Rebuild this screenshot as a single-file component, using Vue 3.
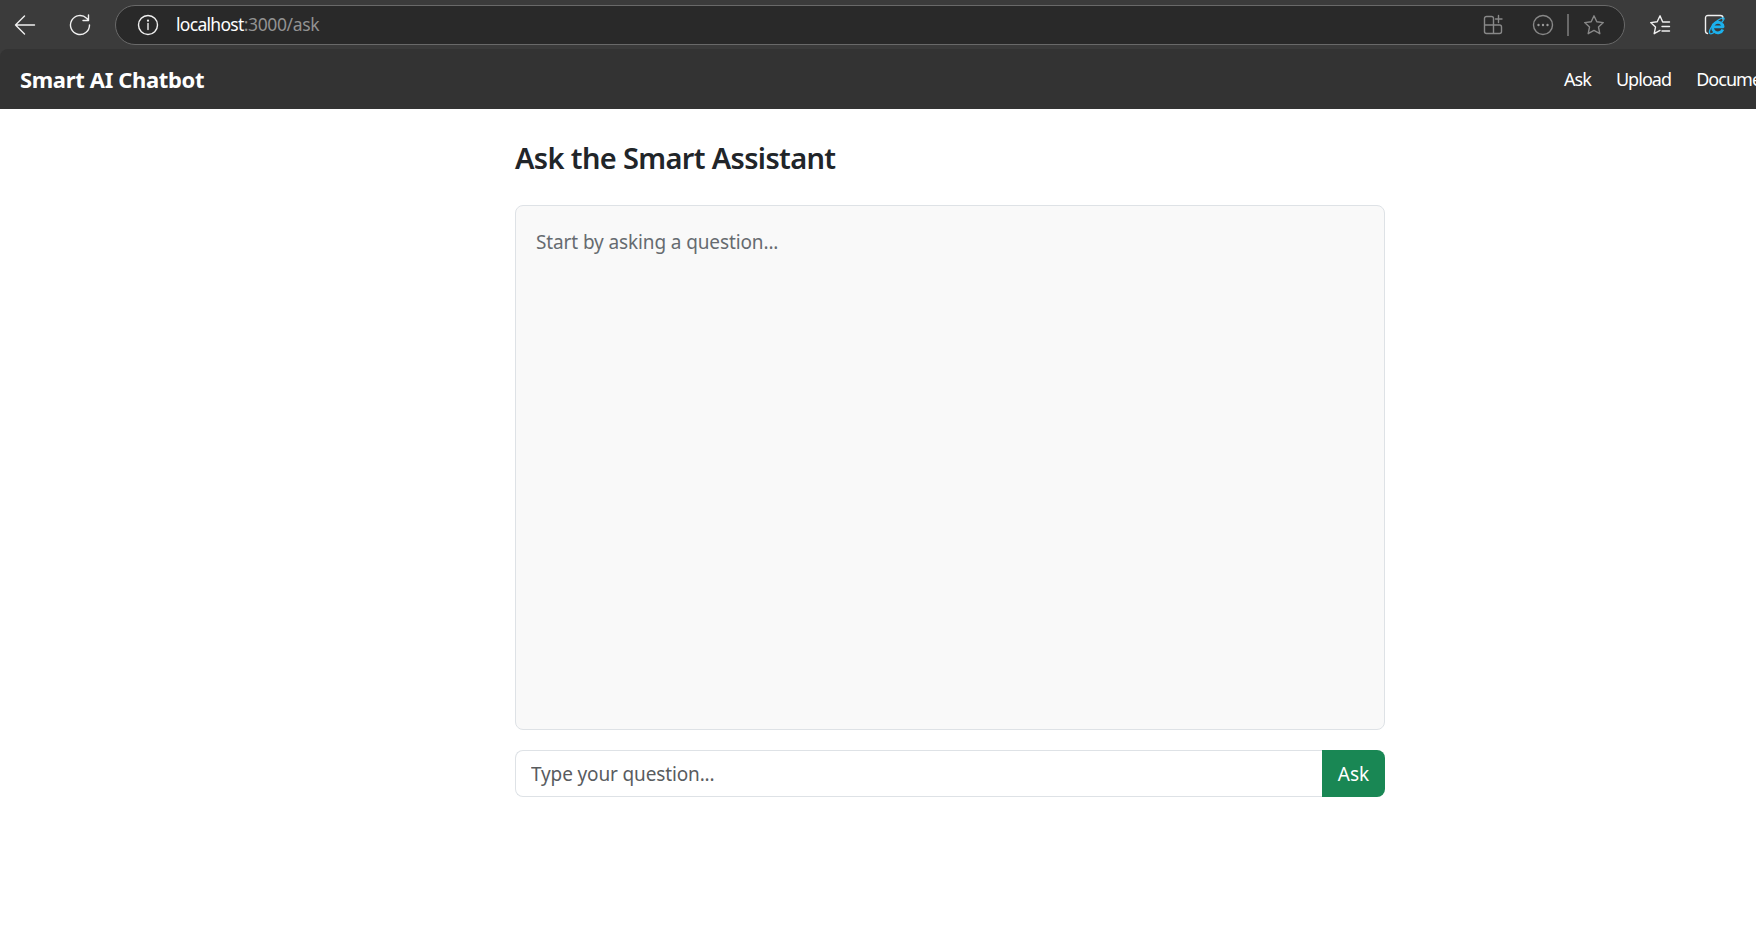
<script setup>
import { ref } from 'vue'

const question = ref('')
const links = ['Ask', 'Upload', 'Documents']
</script>

<template>
  <div class="window">
    <header class="toolbar">
      <svg class="icon back" width="22" height="22" viewBox="0 0 22 22">
        <path d="M20.5 11H1.5M10.5 2L1.5 11l9 9" />
      </svg>
      <svg class="icon reload" width="22" height="22" viewBox="0 0 22 22">
        <path d="M20.5 11A9.5 9.5 0 1 1 17.6 4.2L19.4 6M19.5 1v5.5H14" />
      </svg>
      <div class="address">
        <svg class="icon info" width="22" height="22" viewBox="0 0 22 22">
          <circle cx="11" cy="11" r="9.5" />
          <path d="M11 9.5v6" />
          <circle class="dot" cx="11" cy="6.7" r="1.1" />
        </svg>
        <div class="url"><span class="host">localhost</span><span class="path">:3000/ask</span></div>
        <svg class="icon dim apps" width="22" height="22" viewBox="0 0 22 22">
          <path d="M10.500 11V4.500a2 2 0 0 0-2-2h-5a2 2 0 0 0-2 2v13a2 2 0 0 0 2 2h13a2 2 0 0 0 2-2v-4.500a2 2 0 0 0-2-2h-15M10.500 11v8.500M15.500 1.500v7M12.500 5h6.500" />
        </svg>
        <svg class="icon dim more" width="22" height="22" viewBox="0 0 22 22">
          <circle cx="11" cy="11" r="9.5" />
          <circle class="dot" cx="6.5" cy="11" r="1.2" />
          <circle class="dot" cx="11" cy="11" r="1.2" />
          <circle class="dot" cx="15.5" cy="11" r="1.2" />
        </svg>
        <span class="divider"></span>
        <svg class="icon dim star" width="22" height="22" viewBox="0 0 22 22">
          <path d="M11 1.8l2.8 6 6.5.8-4.8 4.5 1.3 6.6-5.8-3.3-5.8 3.3 1.3-6.6L1.7 8.6l6.5-.8z" />
        </svg>
      </div>
      <svg class="icon favorites" width="22" height="22" viewBox="0 0 22 22">
        <path d="M20.5 8h-6.8L11 1.8 8.2 7.8 1.7 8.6l4.8 4.5-1.3 6.6 5.8-3.3M13 12.5h7.5M13 17h7.5" />
      </svg>
      <svg class="icon ie" width="22" height="22" viewBox="0 0 22 22">
        <path d="M3.5 19.5q-2-.3-2-2.5V4q0-2.5 2.5-2.5h12.500q2.500 0 2.500 2.500v1" />
        <path class="letter" d="M18.8 15.5A5.3 5.3 0 1 1 19.1 12.8H9" />
        <path class="orbit" d="M18 8C23 2.2 18 3.5 13.5 6.5 8 10.5 4 17.5 6 19.5c1.2 1 3-.3 4.4-1.3" />
      </svg>
    </header>

    <nav class="navbar">
      <div class="brand">Smart AI Chatbot</div>
      <div class="links">
        <a v-for="link in links" :key="link">{{ link }}</a>
      </div>
    </nav>

    <main class="content">
      <h2>Ask the Smart Assistant</h2>
      <section class="conversation"><p>Start by asking a question...</p></section>
      <form class="composer" @submit.prevent>
        <input v-model="question" type="text" placeholder="Type your question..." />
        <button type="submit">Ask</button>
      </form>
    </main>
  </div>
</template>

<style>
body {
  margin: 0;
  overflow: hidden;
  background: #fff;
}
</style>

<style scoped>
.window {
  width: 100%;
  height: 931px;
  overflow: hidden;
  background: linear-gradient(#3b3b3b 60px, #fff 60px);
  font-family: "Noto Sans", "Open Sans", sans-serif;
  color: #212529;
}
.toolbar {
  height: 49px;
  box-sizing: border-box;
  display: flex;
  align-items: center;
  padding-left: 14px;
  background: #3b3b3b;
}
.icon {
  flex: none;
  fill: none;
  stroke: #f0f0f0;
  stroke-width: 1.4;
  stroke-linecap: round;
  stroke-linejoin: round;
}
.dot {
  fill: #f0f0f0;
  stroke: none;
}
.dim {
  stroke: #888;
}
.dim .dot {
  fill: #999;
}
.reload {
  margin-left: 33px;
}
.address {
  width: 1510px;
  height: 40px;
  box-sizing: border-box;
  margin-left: 24px;
  display: flex;
  align-items: center;
  border: 1px solid #696969;
  border-radius: 20px;
  background: #292929;
}
.info {
  margin-left: 21px;
}
.url {
  margin-left: 17px;
  flex: 1;
  padding-bottom: 2px;
  font-size: 17.5px;
  line-height: 36px;
  white-space: nowrap;
}
.host {
  color: #fff;
  letter-spacing: -0.7px;
}
.path {
  color: #929292;
  letter-spacing: -0.35px;
}
.more {
  margin-left: 27px;
}
.divider {
  width: 2px;
  height: 22px;
  margin-left: 13px;
  background: #696969;
}
.star {
  margin: 0 19px 0 14px;
}
.favorites {
  margin-left: 24px;
}
.ie {
  margin-left: 33px;
}
.ie .letter {
  stroke: #1cb1ec;
  stroke-width: 2.8;
  stroke-linecap: butt;
}
.ie .orbit {
  stroke: #1cb1ec;
  stroke-width: 1.3;
}
.navbar {
  height: 60px;
  display: flex;
  align-items: center;
  justify-content: space-between;
  padding-left: 20px;
  border-top-left-radius: 8px;
  background: #333;
  color: #fff;
}
.brand {
  font-size: 22px;
  font-weight: 700;
  letter-spacing: -0.35px;
}
.links {
  width: 192px;
  display: flex;
  gap: 25px;
  font-size: 18px;
  letter-spacing: -0.95px;
}
.content {
  width: 870px;
  margin: 0 auto;
  padding-top: 31px;
  position: relative;
  left: 72px;
}
h2 {
  margin: 0 0 29px;
  font-size: 29px;
  font-weight: 600;
  line-height: 36px;
  letter-spacing: -0.65px;
  white-space: nowrap;
}
.conversation {
  height: 525px;
  box-sizing: border-box;
  padding: 20px;
  border: 1px solid #dee2e6;
  border-radius: 8px;
  background: #f9f9f9;
}
p {
  margin: 0;
  font-size: 19px;
  line-height: 32px;
  letter-spacing: -0.12px;
  color: #666b70;
}
.composer {
  height: 47px;
  margin-top: 20px;
  display: flex;
}
input {
  flex: 1;
  min-width: 0;
  box-sizing: border-box;
  padding: 0 15px;
  border: 1px solid #dee2e6;
  border-right: 0;
  border-radius: 8px 0 0 8px;
  outline: none;
  background: #fff;
  font: 19px "Noto Sans", "Open Sans", sans-serif;
  letter-spacing: -0.14px;
}
input::placeholder {
  color: #595c5f;
  opacity: 1;
}
button {
  width: 63px;
  padding: 0;
  border: 0;
  border-radius: 0 8px 8px 0;
  background: #198754;
  color: #fff;
  font: 19px "Noto Sans", "Open Sans", sans-serif;
}
</style>
